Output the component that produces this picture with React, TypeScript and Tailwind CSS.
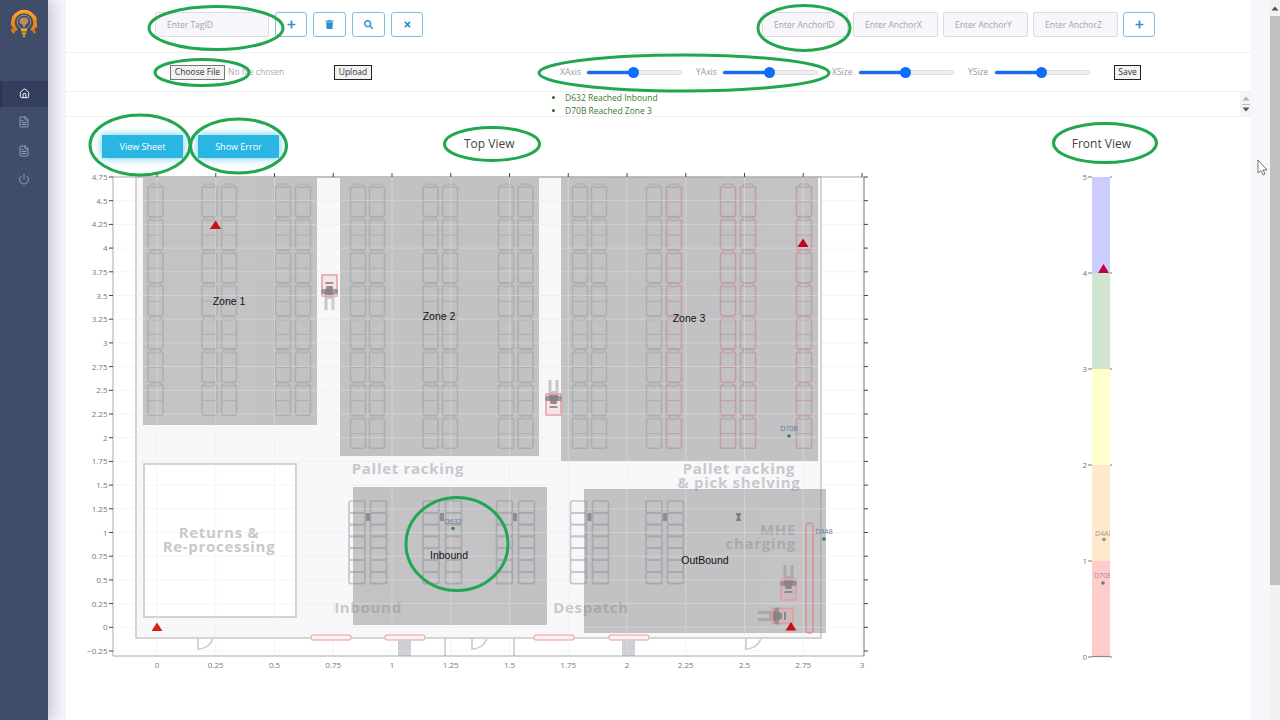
import { FaPlus, FaTrash, FaSearch, FaTimes } from "react-icons/fa";
import { Home, FileText, Power } from "lucide-react";

const xTicks = ["0", "0.25", "0.5", "0.75", "1", "1.25", "1.5", "1.75", "2", "2.25", "2.5", "2.75", "3"];
const yTicks = ["−0.25", "0", "0.25", "0.5", "0.75", "1", "1.25", "1.5", "1.75", "2", "2.25", "2.5", "2.75", "3", "3.25", "3.5", "3.75", "4", "4.25", "4.5", "4.75"];
const xPos = (i: number) => 157 + i * 58.75;
const yPos = (i: number) => 651 - i * 23.7;

const GREY = "#cfcfd2";
const PINK = "#f2b6b8";

// rack columns: centre x, last row count, colour
const racks: { x: number; rows: number; color: string }[] = [
  ...[155.5, 209.5, 229, 283, 303].map((x) => ({ x, rows: 7, color: GREY })),
  ...[358, 377, 430.5, 450, 506, 525.5].map((x) => ({ x, rows: 8, color: GREY })),
  ...[580, 599, 654].map((x) => ({ x, rows: 8, color: GREY })),
  ...[674, 728, 748, 804].map((x) => ({ x, rows: 8, color: PINK })),
];

const shortRacks = [357, 378.5, 431, 453.5, 504.5, 526.5, 578.5, 600.5, 654, 675.5];

const RackColumn = ({ x, rows, color }: { x: number; rows: number; color: string }) => (
  <g fill="none" stroke={color} strokeWidth="1.6">
    {Array.from({ length: rows }).map((_, i) => {
      const y = 186.5 + i * 33.1;
      return (
        <g key={i}>
          <rect x={x - 7.5} y={y} width="15" height="30" rx="1.5" />
          <line x1={x - 7.5} x2={x + 7.5} y1={y + 15.5} y2={y + 15.5} strokeWidth="1" />
          <rect x={x - 5} y={y - 2.5} width="10" height="3.5" rx="1.2" strokeWidth="1" fill="#efeff1" />
        </g>
      );
    })}
  </g>
);

const ShortRack = ({ x }: { x: number }) => (
  <g fill="none" stroke="#c6c5ca" strokeWidth="1.7">
    {Array.from({ length: 7 }).map((_, i) => (
      <rect key={i} x={x - 8} y={501 + i * 11.8} width="16" height="11.8" rx="2" />
    ))}
  </g>
);

const Forklift = ({ x, y, rotate = 0 }: { x: number; y: number; rotate?: number }) => (
  <g transform={`translate(${x} ${y}) rotate(${rotate})`}>
    <path d="M-5 -20 H-2 V-9 H2 V-20 H5 V-5 H-5 Z" fill="#8b8a8f" opacity="0.45" />
    <rect x="-7.5" y="-6" width="15" height="21" fill="#eda5a8" fillOpacity="0.22" stroke="#e8989c" strokeWidth="1.4" />
    <rect x="-8.5" y="-4" width="17" height="5" rx="2" fill="#8d8c90" opacity="0.85" />
    <path d="M-5 -5 H5 L3 4 H-3 Z" fill="#8a7f84" opacity="0.9" />
    <rect x="-4" y="6" width="8" height="2" fill="#77767a" opacity="0.75" />
  </g>
);

const Door = ({ x }: { x: number }) => (
  <path d={`M${x} 638 V649 C${x + 7} 649 ${x + 13} 645 ${x + 15} 638`} fill="none" stroke="#d0cfd3" strokeWidth="1.8" />
);

const TopView = () => (
  <svg viewBox="80 170 800 510" className="h-[510px] w-[800px] shrink-0 font-['Open_Sans',sans-serif]">
    {/* floor plan */}
    <rect x="136" y="177" width="685" height="461" fill="#f8f8fa" stroke="#d0cfd3" strokeWidth="1.8" />
    <rect x="144" y="464" width="152" height="153" fill="#ffffff" stroke="#cfced2" strokeWidth="1.8" />
    {racks.map((r) => (
      <RackColumn key={r.x} {...r} />
    ))}
    {shortRacks.map((x) => (
      <ShortRack key={x} x={x} />
    ))}
    {[368, 442, 515, 589.5, 665].map((x) => (
      <rect key={x} x={x - 2} y="513" width="4" height="8" fill="#8f8e92" />
    ))}
    <path d="M735.5 513 H741.5 L739.5 517 L741.5 521 H735.5 L737.5 517 Z" fill="#77767a" />
    {[311, 385, 534, 609].map((x) => (
      <rect key={x} x={x} y="635" width="40" height="5" rx="2.5" fill="#fbf3f3" stroke={PINK} strokeWidth="1.4" />
    ))}
    <rect x="398" y="640" width="13" height="16" fill="#cfced2" />
    <rect x="622" y="640" width="13" height="16" fill="#cfced2" />
    <line x1="445" x2="445" y1="638" y2="656" stroke="#d0cfd3" strokeWidth="1.8" />
    <line x1="514" x2="514" y1="638" y2="656" stroke="#d0cfd3" strokeWidth="1.8" />
    {[198, 472, 746].map((x) => (
      <Door key={x} x={x} />
    ))}

    <g fontSize="15" fontWeight="700" fill="#c8c7cb" textAnchor="middle" letterSpacing="0.7">
      <text x="408" y="474">Pallet racking</text>
      <text x="739" y="474">Pallet racking</text>
      <text x="739" y="488">&amp; pick shelving</text>
      <text x="219" y="538">Returns &amp;</text>
      <text x="219" y="552">Re-processing</text>
      <text x="368" y="613">Inbound</text>
      <text x="591" y="613">Despatch</text>
      <text x="796" y="535" textAnchor="end">MHE</text>
      <text x="796" y="549" textAnchor="end">charging</text>
    </g>

    {/* zones */}
    <g fill="#8d8b8e" opacity="0.5">
      <rect x="143" y="178" width="174" height="247" />
      <rect x="340" y="178" width="199" height="278" />
      <rect x="561" y="177" width="257" height="284" />
      <rect x="353" y="487" width="194" height="138" />
      <rect x="584" y="489" width="242" height="144" />
    </g>

    <rect x="806" y="523" width="7" height="110" rx="3.5" fill="none" stroke="#d98f93" strokeWidth="1.6" />
    <Forklift x={329.5} y={290} rotate={180} />
    <Forklift x={553.5} y={400} />
    <Forklift x={788.5} y={585} />
    <Forklift x={778} y={616} rotate={-90} />

    {/* grid */}
    <g stroke="#e9e9ee" strokeWidth="1" opacity="0.4">
      {xTicks.map((_, i) => (
        <line key={i} x1={xPos(i)} x2={xPos(i)} y1="177" y2="656" />
      ))}
      {yTicks.map((_, i) => (
        <line key={i} x1="113" x2="864" y1={yPos(i)} y2={yPos(i)} />
      ))}
    </g>

    {/* axes */}
    <line x1="113" x2="864" y1="177" y2="177" stroke="#a9a9a9" />
    <line x1="113" x2="864" y1="656" y2="656" stroke="#a9a9a9" />
    <line x1="113" x2="113" y1="177" y2="656" stroke="#a9a9a9" />
    <line x1="864" x2="864" y1="177" y2="656" stroke="#77777b" />
    {xTicks.map((t, i) => (
      <g key={t}>
        <line x1={xPos(i)} x2={xPos(i)} y1="173" y2="177" stroke="#444" />
        <text x={xPos(i)} y="668" fontSize="8" fill="#777" textAnchor="middle">{t}</text>
      </g>
    ))}
    {yTicks.map((t, i) => (
      <g key={t}>
        <line x1="109" x2="113" y1={yPos(i)} y2={yPos(i)} stroke="#444" />
        <line x1="864" x2="868" y1={yPos(i)} y2={yPos(i)} stroke="#444" />
        <text x="107.5" y={yPos(i) + 3} fontSize="8" fill="#777" textAnchor="end">{t}</text>
      </g>
    ))}

    {/* tags */}
    <g fill="#c4120c">
      <path d="M215.5 220.5 L221 229 H210 Z" />
      <path d="M803 238.5 L808.5 247 H797.5 Z" fill="#c4001a" />
      <path d="M157 622.5 L162.5 631 H151.5 Z" fill="#de2210" />
      <path d="M791 622 L796.5 630.5 H785.5 Z" />
    </g>
    <g fontSize="7" fill="#5c7b9c" textAnchor="middle">
      <text x="453" y="524">D632</text>
      <text x="789" y="431">D70B</text>
      <text x="824" y="534">D4A8</text>
    </g>
    <g fill="#2e8b57">
      <circle cx="453" cy="528.5" r="1.8" />
      <circle cx="789" cy="436" r="1.8" />
      <circle cx="824" cy="539" r="1.8" />
    </g>
    <g fontSize="10.5" fill="#111" textAnchor="middle" className="font-['Liberation_Sans',sans-serif]">
      <text x="229" y="305">Zone 1</text>
      <text x="439" y="320">Zone 2</text>
      <text x="689" y="322">Zone 3</text>
      <text x="449" y="559">Inbound</text>
      <text x="705" y="564">OutBound</text>
    </g>
  </svg>
);

const FrontView = () => {
  const bands = ["#ccccff", "#d0e4d0", "#ffffcc", "#ffe8cc", "#ffcccc"];
  return (
    <svg viewBox="1076 170 44 500" className="h-[500px] w-[44px] shrink-0 font-['Open_Sans',sans-serif]">
      {bands.map((c, i) => (
        <rect key={c} x="1092" y={177 + i * 96} width="18" height="96" fill={c} />
      ))}
      <line x1="1092" x2="1110" y1="656.5" y2="656.5" stroke="#8a8a8e" strokeWidth="1.2" />
      {[5, 4, 3, 2, 1, 0].map((n, i) => (
        <g key={n}>
          <line x1="1088" x2="1092" y1={177 + i * 96} y2={177 + i * 96} stroke="#777" />
          <line x1="1110" x2="1112" y1={177 + i * 96} y2={177 + i * 96} stroke="#777" />
          <text x="1087" y={180 + i * 96} fontSize="8" fill="#777" textAnchor="end">{n}</text>
        </g>
      ))}
      <path d="M1103.5 264 L1109 273 H1098 Z" fill="#c00045" />
      <g fontSize="7" fill="#a89a92">
        <text x="1095" y="536">D4A8</text>
        <text x="1094" y="578" fill="#b583a0">D70B</text>
      </g>
      <rect x="1110" y="520" width="10" height="70" fill="#ffffff" />
      <circle cx="1104" cy="539.5" r="1.8" fill="#6fa86f" />
      <circle cx="1103" cy="583" r="1.8" fill="#5f8a5f" />
    </svg>
  );
};

const Logo = () => (
  <svg viewBox="0 0 26 30" className="h-[30px] w-[26px]">
    <defs>
      <linearGradient id="gear" x1="0" y1="0" x2="0" y2="1">
        <stop offset="0" stopColor="#f5a524" />
        <stop offset="1" stopColor="#e8760f" />
      </linearGradient>
    </defs>
    {/* gear ring, open at the bottom for the bulb */}
    <path d="M5.5 21.5 A11 11 0 1 1 20.5 21.5" fill="none" stroke="url(#gear)" strokeWidth="3.4" />
    <path d="M3.2 24 A13 13 0 1 1 22.8 24" fill="none" stroke="url(#gear)" strokeWidth="2.4" strokeDasharray="4.5 3.6" />
    <circle cx="13" cy="13" r="6.8" fill="none" stroke="#c9b48c" strokeWidth="0.7" />
    <path d="M8.5 12.5 C8.5 9.5 11 8.2 13.2 8.6 C16 8.2 17.6 10.5 17.3 12.5 C17.3 14.5 15.2 15 14.4 15.6 L14 18 H12 L11.6 15.6 C10 15.2 8.5 14.5 8.5 12.5 Z" fill="#b8925c" />
    <path d="M9.5 20 H16.5 L15.5 22.5 H10.5 Z M10.5 23.5 H15.5 L14.8 25.5 H11.2 Z M11.5 26.5 H14.5 L13.6 28.5 H12.4 Z" fill="#f2a51f" />
  </svg>
);

const Input = ({ placeholder, className }: { placeholder: string; className: string }) => (
  <input
    placeholder={placeholder}
    className={`h-[25px] rounded-[2px] border border-[#dcdce2] bg-[#f6f6fb] text-[8.5px] text-[#777] outline-none placeholder:text-[#a4a4aa] ${className}`}
  />
);

const IconButton = ({ children, className = "w-[33px]" }: { children: React.ReactNode; className?: string }) => (
  <button className={`flex h-[25px] items-center justify-center rounded-[3px] border border-[#7cc0de] bg-white text-[9px] text-[#2f8fd0] ${className}`}>
    {children}
  </button>
);

const Slider = ({ label, className = "" }: { label: string; className?: string }) => (
  <div className={`flex items-center ${className}`}>
    <span className="w-[26px] text-[8.5px] text-[#999]">{label}</span>
    <div className="relative h-[5px] w-[96px] rounded-full border border-[#dcdcdc] bg-[#efefef]">
      <div className="h-full w-[47px] rounded-full bg-[#0d6efd]" />
      <div className="absolute left-[41px] top-[-4px] h-[11px] w-[11px] rounded-full bg-[#0d6efd]" />
    </div>
  </div>
);

const SmallButton = ({ children, className }: { children: React.ReactNode; className: string }) => (
  <button className={`h-[15px] border bg-[#f2f2f2] text-[8.5px] leading-none text-[#333] ${className}`}>{children}</button>
);

const ScrollArrow = ({ up, color }: { up?: boolean; color: string }) => (
  <svg viewBox="0 0 8 5" className="h-[5px] w-[8px]">
    <path d={up ? "M4 0.5 L7.5 4.5 H0.5 Z" : "M4 4.5 L7.5 0.5 H0.5 Z"} fill={color} />
  </svg>
);

const Annotations = () => (
  <svg viewBox="0 0 1280 720" className="pointer-events-none absolute inset-0 h-[720px] w-[1280px]">
    <g fill="none" stroke="#22a650" strokeWidth="3">
      <ellipse cx="216" cy="28" rx="67" ry="21.5" />
      <ellipse cx="202" cy="72.5" rx="47" ry="13" />
      <ellipse cx="804" cy="28" rx="46" ry="22.5" />
      <ellipse cx="684" cy="73" rx="145" ry="18" />
      <ellipse cx="140" cy="145" rx="50" ry="30" />
      <ellipse cx="238.5" cy="146" rx="48" ry="27" />
      <ellipse cx="492" cy="144" rx="47.5" ry="16.5" />
      <ellipse cx="1105" cy="143" rx="51.5" ry="19.5" />
      <ellipse cx="457" cy="544" rx="51" ry="46.5" />
    </g>
    <path d="M1258 160 V173 L1261 170.5 L1263 175 L1265 174 L1263 170 H1267 Z" fill="#ffffff" stroke="#555" strokeWidth="0.8" />
  </svg>
);

const App = () => (
  <div className="relative flex h-[720px] w-[1280px] overflow-hidden bg-[#f6f6fb] font-['Open_Sans',sans-serif]">
    <aside className="flex w-12 shrink-0 flex-col items-stretch bg-[#3f4d6b] shadow-[4px_0_14px_rgba(63,77,107,0.3)]">
      <div className="flex h-[81px] justify-center pt-[9px]">
        <Logo />
      </div>
      <div className="flex h-[26px] items-center justify-center border-l-2 border-[#2b3550] bg-[#333e5c] pb-px pr-0.5 text-white">
        <Home size={11} />
      </div>
      <div className="mt-[9px] flex flex-col items-center gap-[16.5px] text-[#a9b4cc]">
        <FileText size={12} strokeWidth={1.6} />
        <FileText size={12} strokeWidth={1.6} />
        <Power size={12} strokeWidth={1.6} />
      </div>
    </aside>

    <main className="ml-[18px] mr-[19px] flex h-full flex-1 flex-col bg-white">
      <div className="flex h-[53px] shrink-0 items-start border-b border-[#f1f1f4] pt-[12px]">
        <Input placeholder="Enter TagID" className="ml-[89px] w-[114px] pl-[11px]" />
        <div className="ml-[6px] flex gap-[6px]">
          <IconButton className="w-[32px]"><FaPlus /></IconButton>
          <IconButton><FaTrash /></IconButton>
          <IconButton><FaSearch /></IconButton>
          <IconButton className="w-[32px]"><FaTimes /></IconButton>
        </div>
        <div className="ml-auto mr-[96px] flex gap-[5px]">
          <Input placeholder="Enter AnchorID" className="w-[86px] pl-[11px]" />
          <Input placeholder="Enter AnchorX" className="w-[85px] pl-[11px]" />
          <Input placeholder="Enter AnchorY" className="w-[85px] pl-[11px]" />
          <Input placeholder="Enter AnchorZ" className="w-[85px] pl-[11px]" />
          <IconButton className="w-[32px]"><FaPlus /></IconButton>
        </div>
      </div>

      <div className="flex h-[39px] shrink-0 items-center border-b border-[#f1f1f4]">
        <SmallButton className="ml-[104px] w-[55px] border-[#777]">Choose File</SmallButton>
        <span className="ml-[3px] w-[106px] text-[8.5px] text-[#aaa]">No file chosen</span>
        <SmallButton className="w-[38px] border-[#222]">Upload</SmallButton>
        <Slider label="XAxis" className="ml-[188px]" />
        <Slider label="YAxis" className="ml-[14px]" />
        <Slider label="XSize" className="ml-[14px]" />
        <Slider label="YSize" className="ml-[14px]" />
        <SmallButton className="ml-[24px] w-[27px] border-[#222]">Save</SmallButton>
      </div>

      <div className="flex h-[25px] shrink-0 items-center border-b border-[#f1f1f4]">
        <ul className="ml-[490px] list-disc pl-[9px] text-[8.5px] leading-[13px] text-[#3d7a2e] marker:text-[#2a6a20]">
          <li>D632 Reached Inbound</li>
          <li>D70B Reached Zone 3</li>
        </ul>
        <div className="ml-auto flex h-full w-[11px] flex-col items-center justify-between bg-[#f5f5f5] py-[4px]">
          <ScrollArrow up color="#b5b5b5" />
          <div className="h-px w-[8px] bg-[#bbb]" />
          <ScrollArrow color="#555" />
        </div>
      </div>

      <div className="flex h-[53px] shrink-0 items-start pt-[18px]">
        <button className="ml-[36px] h-[23px] w-[81px] bg-[#29b6e3] text-[9px] text-white shadow-[0_0_9px_rgba(41,182,227,0.75)]">View Sheet</button>
        <button className="ml-[15px] h-[23px] w-[81px] bg-[#29b6e3] text-[9px] text-white shadow-[0_0_9px_rgba(41,182,227,0.75)]">Show Error</button>
        <span className="ml-[185px] text-[12px] leading-[17px] text-[#444]">Top View</span>
        <span className="ml-auto mr-[120px] text-[12px] leading-[17px] text-[#444]">Front View</span>
      </div>

      <div className="flex flex-1 items-start overflow-hidden">
        <div className="ml-[14px]">
          <TopView />
        </div>
        <div className="ml-auto mr-[131px]">
          <FrontView />
        </div>
      </div>
    </main>

    <div className="flex w-[10px] shrink-0 flex-col items-center bg-[#f1f1f1]">
      <div className="flex h-[16px] items-center">
        <ScrollArrow up color="#505050" />
      </div>
      <div className="h-[569px] w-full bg-[#c1c1c1]" />
    </div>

    <Annotations />
  </div>
);

export default App;
